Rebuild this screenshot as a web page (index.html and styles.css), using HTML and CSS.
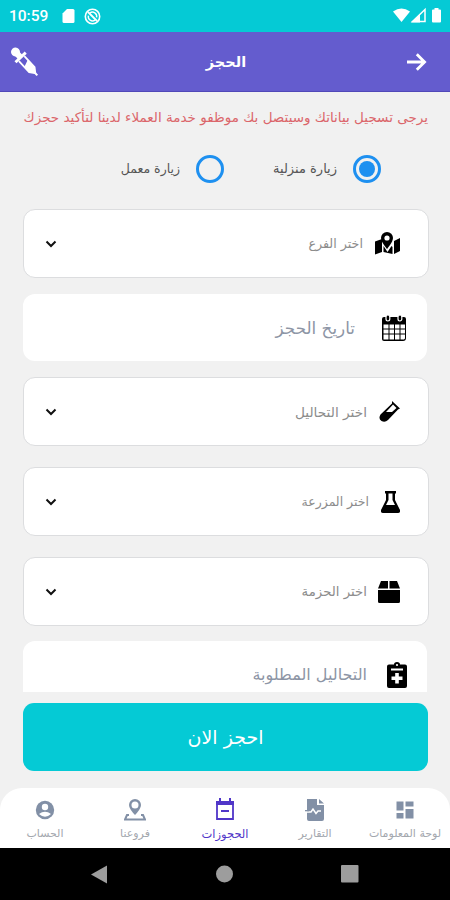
FILE: index.html
```html
<!DOCTYPE html>
<html lang="ar" dir="rtl">
<head>
<meta charset="utf-8">
<title>الحجز</title>
<link rel="stylesheet" href="styles.css">
</head>
<body>
<div class="status" dir="ltr">
  <span class="clock">10:59</span>
  <svg class="sd" width="13" height="16" viewBox="0 0 13 16"><path fill="#fff" d="M5 1h6q1.500 0 1.500 1.500v11q0 1.500-1.500 1.500H2Q.5 15 .5 13.500V5.500z"/></svg>
  <svg class="sync" width="17" height="17" viewBox="0 0 17 17" fill="none" stroke="#fff"><circle cx="8.500" cy="8.500" r="7.200" stroke-width="1.600"/><path stroke-width="1.400" d="M6 4.800a4.300 4.300 0 0 1 6.600 4.500M11 12.200a4.300 4.300 0 0 1-6.600-4.500"/><path stroke-width="1.800" d="M4 4l9 9"/></svg>
  <svg class="signals" width="50" height="18" viewBox="0 0 50 18"><path fill="#fff" d="M0 4.500Q8.500-1.500 17 4.500L8.500 15z"/><path fill="none" stroke="#fff" stroke-width="1.500" d="M19.500 14.500L32 2.500v12z"/><path fill="#fff" d="M18 15.500L27 7v8.500zM41.500 1h4v1.500H47q1 0 1 1V14.500q0 1-1 1h-7q-1 0-1-1V3.500q0-1 1-1h1.500z"/></svg>
</div>
<header class="appbar" dir="ltr">
  <svg width="30" height="30" viewBox="0 0 30 30"><g transform="translate(4.500 5) rotate(-43)"><circle cx="0" cy="0" r="4.500" fill="#fff"/><path fill="#fff" d="M-3 2h6v4h4v3H-7V6h4z"/><path fill="none" stroke="#fff" stroke-width="1.800" d="M-3.700 9v15l3.700 5 3.700-5V9"/><path fill="#fff" d="M-4 17l8-3v10l-3 4v4h-2v-4L-4 24z"/></g></svg>
  <h1 dir="rtl"><span>الحجز</span></h1>
  <svg width="20" height="18" viewBox="0 0 20 18"><path fill="none" stroke="#fff" stroke-width="2.800" d="M0 9h17M9.800 1.200L17.600 9l-7.800 7.800"/></svg>
</header>
<main class="form">
  <p class="notice"><span>يرجى تسجيل بياناتك وسيتصل بك موظفو خدمة العملاء لدينا لتأكيد حجزك</span></p>
  <div class="radios">
    <span class="radio on"></span><span class="rlabel home">زيارة منزلية</span>
    <span class="radio"></span><span class="rlabel lab">زيارة معمل</span>
  </div>
  <div class="card select branch">
    <svg width="27" height="23" viewBox="0 0 27 23"><path d="M1 9.500L8 7v13l-7 2.500zM20 9l6-3v13l-6 3zM9.500 14l4 6 4-6 1 1v7l-9-2z"/><path d="M13 0a6 6 0 0 1 6 6c0 4-6 11-6 11S7 10 7 6a6 6 0 0 1 6-6z"/><circle cx="13" cy="6" r="2.600" fill="#fff"/></svg>
    <span class="label">اختر الفرع</span>
    <svg class="chev" width="12" height="8" viewBox="0 0 12 8"><path d="M1.500 1.500L6 6l4.500-4.500"/></svg>
  </div>
  <div class="card input date">
    <svg width="26" height="28" viewBox="0 0 26 28"><path d="M3 3h20q2 0 2 2v19q0 3-3 3H3q-2 0-2-2V5q0-2 2-2z"/><path fill="#fff" d="M2.500 10.500h5v4h-5zm6 0h4.500v4H8.500zm5.500 0h4.500v4H14zm5.500 0H24v4h-4.500zM2.500 15.500h5v4h-5zm6 0h4.500v4H8.500zm5.500 0h4.500v4H14zm5.500 0H24v4h-4.500zM2.500 20.500h5v5h-5zm6 0h4.500v5H8.500zm5.500 0h4.500v5H14zm5.500 0H24v4l-1 1h-3.500z"/><g stroke="#fff" stroke-width="1.200"><rect x="5" y="1" width="3.800" height="6" rx="1.900"/><rect x="17" y="1" width="3.800" height="6" rx="1.900"/></g></svg>
    <span class="label">تاريخ الحجز</span>
  </div>
  <div class="card select tests">
    <svg width="21" height="21" viewBox="0 0 21 21"><path d="M13 0l8 7.500-2 1L9 19q-3 3-6.500 1t-1-6.500L13 2.500z"/><path fill="#fff" d="M14 3.500l3.500 3.500L13 11H7z"/></svg>
    <span class="label">اختر التحاليل</span>
    <svg class="chev" width="12" height="8" viewBox="0 0 12 8"><path d="M1.500 1.500L6 6l4.500-4.500"/></svg>
  </div>
  <div class="card select farm">
    <svg width="19" height="22" viewBox="0 0 19 22"><path d="M4 0h11v2.500h-1V9l5 10q.5 3-2 3H2q-2.500 0-2-3L5 9V2.500H4z"/><path fill="#fff" d="M7.500 2.500h4V9l2.500 5H5l2.500-5z"/></svg>
    <span class="label">اختر المزرعة</span>
    <svg class="chev" width="12" height="8" viewBox="0 0 12 8"><path d="M1.500 1.500L6 6l4.500-4.500"/></svg>
  </div>
  <div class="card select pack">
    <svg width="22" height="22" viewBox="0 0 22 22"><path d="M3 0h7v7.500H0zM11.500 0H19l3 7.500H11.500zM0 9h22v11.500q0 1.500-1.500 1.500h-19Q0 22 0 20.500z"/></svg>
    <span class="label">اختر الحزمة</span>
    <svg class="chev" width="12" height="8" viewBox="0 0 12 8"><path d="M1.500 1.500L6 6l4.500-4.500"/></svg>
  </div>
  <div class="card input wanted">
    <svg width="20" height="26" viewBox="0 0 20 26"><path d="M2 2.500h5q0-2.500 3-2.500t3 2.500h5q2 0 2 2V24q0 2-2 2H2q-2 0-2-2V4.500q0-2 2-2z"/><path fill="#fff" d="M4 6.500h12v2H4zM8.200 11h3.600v3.500h3.700V18h-3.700v3.500H8.200V18H4.500v-3.500h3.700z"/><circle cx="10" cy="3" r="1.100" fill="#fff"/></svg>
    <span class="label">التحاليل المطلوبة</span>
  </div>
</main>
<div class="action"><button><span>احجز الان</span></button></div>
<nav class="tabs">
  <a class="tab board"><svg width="18" height="18" viewBox="0 0 18 18"><path d="M.5.500h7v9h-7zM9.500.5h8v5h-8zM.5 12h7v5.500h-7zM9.500 8h8v9.500h-8z"/></svg><span>لوحة المعلومات</span></a>
  <a class="tab reports"><svg width="20" height="22" viewBox="0 0 20 22"><path d="M2 0h10v6h7v14q0 2-2 2H4q-2 0-2-2zM14 0l5 4.500h-5z"/><path fill="none" stroke="#fff" stroke-width="1.500" d="M1 13h5l2-3 3 4.500 2-2.500h3"/><path d="M0 11h4v1.300H0z"/></svg><span>التقارير</span></a>
  <a class="tab bookings"><svg width="20" height="23" viewBox="0 0 20 23"><path fill="none" stroke="currentColor" stroke-width="1.800" d="M2 4h16v17H2zM6 13h8"/><path d="M1 3h18v4H1zM4 0h2v4H4zM14 0h2v4h-2z"/></svg><span>الحجوزات</span></a>
  <a class="tab branches"><svg width="22" height="22" viewBox="0 0 22 22"><path d="M11 0a6 6 0 0 1 6 6c0 4-6 10-6 10S5 10 5 6a6 6 0 0 1 6-6z"/><circle cx="11" cy="6" r="3.500" fill="#fff"/><path fill="none" stroke="currentColor" stroke-width="2" d="M5 16H3l-2 4.500h20L19 16h-2"/></svg><span>فروعنا</span></a>
  <a class="tab account"><svg width="20" height="20" viewBox="0 0 20 20"><circle cx="10" cy="10" r="9.200"/><circle cx="10" cy="7" r="3.200" fill="#fff"/><path fill="#fff" d="M4 14q6-4.500 12 0-6 5.500-12 0z"/></svg><span>الحساب</span></a>
</nav>
<footer class="system" dir="ltr">
  <svg width="16" height="19" viewBox="0 0 16 19"><path d="M16 .5v18L0 9.500z"/></svg>
  <svg width="18" height="18" viewBox="0 0 18 18"><circle cx="9.500" cy="9" r="8.500"/></svg>
  <svg width="18" height="18" viewBox="0 0 18 18"><rect width="17.500" height="17.500" rx="1"/></svg>
</footer>
</body>
</html>
```
FILE: styles.css
```css
* { box-sizing: border-box; }
body { margin: 0; width: 450px; height: 900px; overflow: hidden; display: flex; flex-direction: column; background: #f1f1f1; font-family: "DejaVu Sans", sans-serif; }
svg { display: block; flex: none; }
span { white-space: nowrap; }
.status { height: 32px; flex: none; background: #05cad5; display: flex; align-items: center; padding: 0 7px 0 9px; }
.clock { font: 500 15.500px/32px Roboto, sans-serif; color: #fff; width: 39px; }
.sd { margin-left: 14px; }
.sync { margin-left: 9px; }
.signals { margin-left: auto; }
.appbar { height: 60px; flex: none; background: #645cce; border-bottom: 1px solid #5148b8; display: flex; align-items: center; justify-content: space-between; padding: 0 23px 0 11px; }
.appbar h1 { margin: 0 0 0 4px; font-size: 14.500px; line-height: 24px; color: #fff; font-weight: 700; }
.form { height: 600px; flex: none; overflow: hidden; padding: 0 22px 0 23px; }
.notice { margin: 12px 0 0; height: 26px; line-height: 26px; font-size: 13.500px; color: #db666b; display: flex; justify-content: flex-start; }
.radios { margin-top: 25px; height: 28px; display: flex; align-items: center; padding-right: 47px; }
.radio { width: 28px; height: 28px; border-radius: 50%; border: 3px solid #1e90f0; flex: none; }
.radio.on { background: #1e90f0; background-clip: content-box; padding: 3px; }
.rlabel { width: 64px; margin-right: 16px; font-size: 13px; line-height: 20px; color: #555; }
.rlabel.home { margin-left: 49px; }
.rlabel.lab { font-size: 12.500px; }
.card { background: #fff; display: flex; align-items: center; width: 406px; border-radius: 12px; margin-right: -1px; }
.select { height: 69px; border: 1.500px solid #dcdddf; margin-bottom: 21px; padding-left: 21px; }
.input { width: 404px; margin-right: 1px; height: 67px; }
.label { font-size: 12.700px; line-height: 20px; color: #8c8c8c; }
.input .label { font-size: 16px; color: #8d95a5; }
.chev { margin-right: auto; fill: none; stroke: #111; stroke-width: 2; }
.branch { margin-top: 26px; margin-bottom: 16px; padding-right: 27px; }
.branch .label { margin-right: 11px; }
.date { margin-bottom: 16px; padding-right: 20px; }
.date .label.label { margin-right: 26px; font-size: 16.800px; }
.tests { padding-right: 28px; }
.tests .label { margin-right: 12px; font-size: 13.700px; }
.farm { padding-right: 28px; }
.farm .label { margin-right: 12px; font-size: 12.500px; }
.pack { padding-right: 28px; margin-bottom: 15px; }
.pack .label { margin-right: 11px; font-size: 13.300px; }
.wanted { padding-right: 20px; }
.wanted .label { margin-right: 20px; }
.action { height: 96px; flex: none; padding: 11px 22px 0 23px; }
.action button { display: block; width: 100%; height: 68px; border: 0; border-radius: 11px; background: #05cad5; color: #fff; font: 19px "DejaVu Sans", sans-serif; }
.tabs { height: 60px; flex: none; background: #fff; border-radius: 22px 22px 0 0; display: grid; grid-template-columns: repeat(5, 90px); }
.tab { display: grid; grid-template-rows: 43px 16px; grid-template-columns: 90px; justify-items: center; align-items: center; color: #8290a6; }
.tab svg { fill: currentColor; }
.tab span { font-size: 11px; line-height: 16px; color: #a3a7ae; margin-top: -10px; }
.tab.bookings, .tab.bookings span { color: #5036c8; }
.tab.bookings span { font-size: 11.500px; }
.system { height: 52px; flex: none; background: #000; display: flex; align-items: center; justify-content: space-between; padding: 0 91px 0 91px; }
.system svg { fill: #9d9d9d; }
```
